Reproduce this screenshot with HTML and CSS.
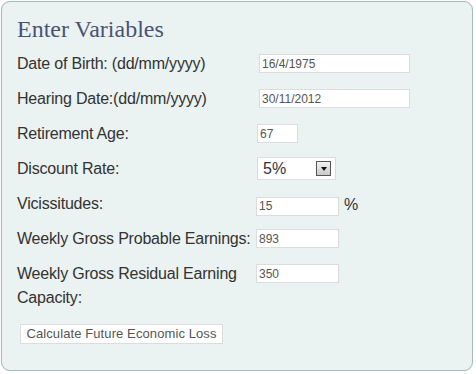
FILE: index.html
```html
<!DOCTYPE html>
<html>
<head>
<meta charset="utf-8">
<link rel="stylesheet" href="styles.css">
</head>
<body>
<div class="panel">
  <h2 class="title">Enter Variables</h2>
  <div class="form">
    <div class="label">Date of Birth: (dd/mm/yyyy)</div>
    <div class="field"><input class="input input-date" type="text" value="16/4/1975"></div>

    <div class="label">Hearing Date:(dd/mm/yyyy)</div>
    <div class="field"><input class="input input-date" type="text" value="30/11/2012"></div>

    <div class="label">Retirement Age:</div>
    <div class="field"><input class="input input-age" type="text" value="67"></div>

    <div class="label">Discount Rate:</div>
    <div class="field">
      <div class="select">
        <span class="select-value">5%</span>
        <span class="select-btn"><svg width="6" height="4" viewBox="0 0 6 4"><path d="M0 0H6L3 4Z" fill="#111"/></svg></span>
      </div>
    </div>

    <div class="label">Vicissitudes:</div>
    <div class="field field-mid"><input class="input input-num" type="text" value="15"><span class="unit">%</span></div>

    <div class="label">Weekly Gross Probable Earnings:</div>
    <div class="field"><input class="input input-num" type="text" value="893"></div>

    <div class="label">Weekly Gross Residual Earning Capacity:</div>
    <div class="field"><input class="input input-num" type="text" value="350"></div>
  </div>
  <button class="btn" type="button">Calculate Future Economic Loss</button>
</div>
</body>
</html>
```
FILE: styles.css
```css
html, body {
  margin: 0;
  padding: 0;
  background: #ffffff;
}
body {
  font-family: "Liberation Sans", Arial, sans-serif;
}
.panel {
  margin: 1px;
  width: 470px;
  height: 368px;
  box-sizing: content-box;
  border: 1px solid #a9bcbc;
  border-radius: 9px;
  background: #eaf2f2;
  padding: 0;
  box-shadow: 0 0 1px rgba(120,150,150,0.4);
}
.title {
  margin: 0;
  padding: 13px 0 0 15px;
  font-family: "Liberation Serif", "DejaVu Serif", serif;
  font-weight: normal;
  font-size: 24px;
  line-height: 28px;
  color: #4b5274;
}
.form {
  display: grid;
  grid-template-columns: 240px 1fr;
  row-gap: 11px;
  margin: 9px 0 0 15px;
}
.label {
  font-size: 16px;
  line-height: 24px;
  letter-spacing: -0.2px;
  color: #333333;
}
.field {
  display: flex;
  align-items: flex-start;
  height: 24px;
}
.field-mid {
  align-items: center;
}
.input {
  box-sizing: border-box;
  height: 19px;
  margin-top: 2px;
  border: 1px solid #dcdcdc;
  background: #ffffff;
  font-family: "Liberation Sans", Arial, sans-serif;
  font-size: 12px;
  color: #555555;
  padding: 0 2px;
  outline: none;
}
.field-mid .input {
  margin-top: 4px;
}
.input-date {
  width: 151px;
  margin-left: 2px;
}
.input-age {
  width: 41px;
}
.input-num {
  width: 83px;
  margin-left: -1px;
}
.unit {
  font-size: 16px;
  color: #333333;
  margin-left: 5px;
  margin-top: 2px;
}
.select {
  box-sizing: border-box;
  width: 79px;
  height: 23px;
  border: 1px solid #dcdcdc;
  background: #ffffff;
  display: flex;
  align-items: center;
  justify-content: space-between;
  padding: 0 4px 0 5px;
}
.select-value {
  font-size: 16px;
  color: #333333;
}
.select-btn {
  box-sizing: border-box;
  width: 15px;
  height: 15px;
  border: 1px solid #555555;
  background: linear-gradient(#f4f4f4, #c8c8c8);
  display: flex;
  align-items: center;
  justify-content: center;
}
.btn {
  display: block;
  margin: 14px 0 0 18px;
  box-sizing: border-box;
  width: 203px;
  height: 20px;
  border: 1px solid #dcdcdc;
  background: #ffffff;
  font-family: "Liberation Sans", Arial, sans-serif;
  font-size: 13px;
  letter-spacing: 0.1px;
  color: #555555;
  padding: 0;
  line-height: 18px;
}
```
